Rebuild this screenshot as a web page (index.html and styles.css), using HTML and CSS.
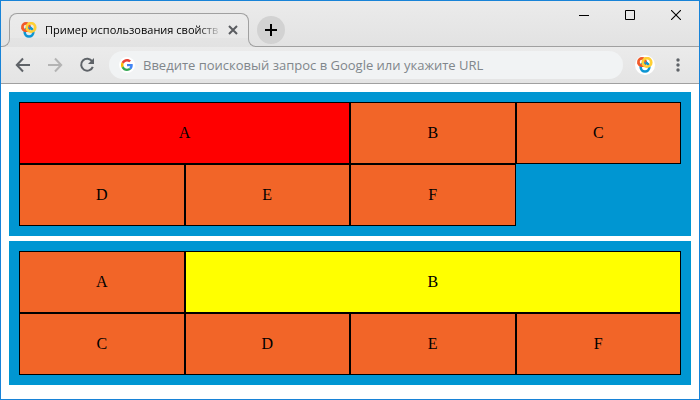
FILE: index.html
```
<!DOCTYPE html>
<html lang="ru">
<head>
<meta charset="utf-8">
<title>Пример использования свойств</title>
<link rel="stylesheet" href="styles.css">
</head>
<body>
<svg class="defs" aria-hidden="true">
  <symbol id="rings" viewBox="0 0 16 16">
    <g fill="none" stroke-width="2.6">
      <circle cx="5" cy="5" r="3.600" stroke="#f15a29"/>
      <circle cx="8" cy="10.2" r="4.300" stroke="#0c95d3"/>
      <path d="M1.400 5.600A3.600 3.600 0 0 0 6.500 8.300" stroke="#f15a29"/>
      <circle cx="10" cy="5.400" r="4.200" stroke="#ffd034" stroke-width="2.800"/>
    </g>
    <path d="M9.400 3.800 11.600 6.800H8.200Z" fill="#0c95d3"/>
    <path d="M7.600 3.600 9.400 4.400 8.600 6.800Z" fill="#f15a29"/>
  </symbol>
</svg>
<div class="window">
  <header class="tabs">
    <span class="flare flare-left"></span>
    <div class="tab">
      <svg class="logo"><use href="#rings"/></svg>
      <span class="title">Пример использования свойств</span>
      <button class="close" aria-label="Закрыть вкладку"><svg width="10" height="10" viewBox="0 0 10 10"><path d="M1 1l8 8M9 1l-8 8" stroke="#5a5c60" stroke-width="2"/></svg></button>
    </div>
    <span class="flare flare-right"></span>
    <div class="strip">
      <button class="add" aria-label="Новая вкладка"><svg width="12" height="12" viewBox="0 0 12 12"><path d="M6 0v12M0 6h12" stroke="#000" stroke-width="2"/></svg></button>
      <div class="controls">
        <button aria-label="Свернуть"><svg width="10" height="10" viewBox="0 0 10 10"><path d="M0 5.5h10" stroke="#000"/></svg></button>
        <button aria-label="Развернуть"><svg width="10" height="10" viewBox="0 0 10 10"><path d="M.5.5h9v9h-9z" fill="none" stroke="#000"/></svg></button>
        <button aria-label="Закрыть"><svg width="10" height="10" viewBox="0 0 10 10"><path d="M0 0l10 10M10 0L0 10" stroke="#000" stroke-width="1.1"/></svg></button>
      </div>
    </div>
  </header>
  <nav class="toolbar">
    <button aria-label="Назад"><svg width="16" height="16" viewBox="0 0 16 16"><path d="M15 8H2M8 1.5 1.8 8 8 14.5" fill="none" stroke="#5f6368" stroke-width="2"/></svg></button>
    <button aria-label="Вперёд" disabled><svg width="16" height="16" viewBox="0 0 16 16"><path d="M1 8h13M8 1.5 14.2 8 8 14.5" fill="none" stroke="#b4b4b4" stroke-width="2"/></svg></button>
    <button aria-label="Обновить"><svg width="16" height="16" viewBox="0 0 16 16"><path d="M13.2 4.4A6 6 0 1 0 13.8 9.8" fill="none" stroke="#5f6368" stroke-width="2"/><path d="M15 1v6H9z" fill="#5f6368"/></svg></button>
    <label class="address">
      <span class="google"><svg width="12" height="12" viewBox="0 0 48 48"><path fill="#EA4335" d="M24 9.5c3.5 0 6.700 1.200 9.200 3.600l6.900-6.900C35.900 2.400 30.500 0 24 0 14.600 0 6.500 5.400 2.600 13.200l8 6.200C12.400 13.700 17.700 9.500 24 9.500z"/><path fill="#4285F4" d="M47 24.600c0-1.600-.2-3.100-.4-4.600H24v9h12.900c-.6 3-2.200 5.500-4.700 7.200l7.700 6C44.400 38 47 31.800 47 24.600z"/><path fill="#FBBC05" d="M10.500 28.600a14.500 14.500 0 0 1 0-9.200l-8-6.200a24 24 0 0 0 0 21.600z"/><path fill="#34A853" d="M24 48c6.500 0 11.900-2.100 15.900-5.800l-7.700-6c-2.200 1.500-4.900 2.300-8.200 2.300-6.300 0-11.600-4.200-13.500-9.900l-8 6.200C6.500 42.600 14.600 48 24 48z"/></svg></span>
      <input type="text" aria-label="Адресная строка" placeholder="Введите поисковый запрос в Google или укажите URL">
    </label>
    <button class="profile" aria-label="Профиль"><svg class="logo"><use href="#rings"/></svg></button>
    <button class="menu" aria-label="Меню"><svg width="4" height="14" viewBox="0 0 4 14"><g fill="#5f6368"><circle cx="2" cy="2" r="1.700"/><circle cx="2" cy="7" r="1.700"/><circle cx="2" cy="12" r="1.700"/></g></svg></button>
  </nav>
  <main>
    <div class="grid">
      <div class="cell red">A</div><div class="cell">B</div><div class="cell">C</div>
      <div class="cell">D</div><div class="cell">E</div><div class="cell">F</div>
    </div>
    <div class="grid">
      <div class="cell">A</div><div class="cell yellow">B</div>
      <div class="cell">C</div><div class="cell">D</div><div class="cell">E</div><div class="cell">F</div>
    </div>
  </main>
</div>
</body>
</html>
```
FILE: styles.css
```
* { box-sizing: border-box; }

body {
  margin: 0;
  font-family: "Liberation Serif", serif;
  font-size: 16px;
}

.defs {
  position: absolute;
  width: 0;
  height: 0;
}

.window {
  min-height: 100vh;
  border: 1px solid #1883d7;
  background: #fff;
}

button {
  display: flex;
  align-items: center;
  justify-content: center;
  flex: none;
  padding: 0;
  border: 0;
  background: none;
}

svg { display: block; }

.logo {
  width: 16px;
  height: 16px;
  flex: none;
}

/* Tab strip */
.tabs {
  display: flex;
  align-items: flex-end;
  height: 46px;
  background: linear-gradient(#ebebeb, #e2e2e2);
}

.flare {
  flex: none;
  width: 9px;
  height: 9px;
  border-bottom: 1px solid #a0a0a0;
}

.flare-left {
  border-right: 1px solid #a0a0a0;
  border-bottom-right-radius: 8px;
}

.flare-right {
  margin-left: -1px;
  border-left: 1px solid #a0a0a0;
  border-bottom-left-radius: 8px;
}

.tab {
  display: flex;
  align-items: center;
  flex: 0 1 240px;
  min-width: 0;
  height: 25px;
  margin: 0 0 9px -1px;
  padding: 8px 10px 0 11px;
  border: 1px solid #a0a0a0;
  border-bottom: 0;
  border-radius: 8px 8px 0 0;
  background: linear-gradient(#ebebeb, #e8e8e8);
}

.title {
  flex: 1;
  min-width: 0;
  margin-left: 8px;
  color: #000;
  font: 11px/16px "Open Sans", "Noto Sans", sans-serif;
  white-space: nowrap;
  mask-image: linear-gradient(to right, #000 calc(100% - 24px), transparent);
}

.close {
  width: 10px;
  height: 16px;
  margin-left: 6px;
}

.strip {
  display: flex;
  align-items: flex-start;
  justify-content: space-between;
  flex: 1;
  height: 46px;
  border-bottom: 1px solid #a0a0a0;
}

.add {
  width: 28px;
  height: 28px;
  margin-top: 15px;
  border-radius: 50%;
  background: #d2d2d2;
}

.controls { display: flex; }

.controls button {
  width: 46px;
  height: 28px;
}

/* Toolbar */
.toolbar {
  display: flex;
  align-items: center;
  height: 37px;
  padding: 0 9px 0 14px;
  border-bottom: 1px solid #a0a0a0;
  background: linear-gradient(#ebebeb, #e4e4e4);
}

.toolbar button {
  width: 16px;
  height: 28px;
  margin-right: 16px;
}

.address {
  display: flex;
  align-items: center;
  flex: 1;
  height: 28px;
  margin-right: 12px;
  margin-left: -2px;
  padding: 0 8px 0 10px;
  border-radius: 14px;
  background: #f1f3f4;
}

.google {
  display: grid;
  place-items: center;
  flex: none;
  width: 16px;
  height: 16px;
  border-radius: 50%;
  background: #fff;
}

.address input {
  flex: 1;
  min-width: 0;
  margin-left: 8px;
  padding: 0;
  border: 0;
  outline: 0;
  background: none;
  font: 13px/20px "Open Sans", "Noto Sans", sans-serif;
}

.address input::placeholder {
  color: #80868b;
  opacity: 1;
}

.toolbar .profile {
  width: 20px;
  height: 20px;
  border-radius: 50%;
  background: #fff;
}

.toolbar .menu {
  width: 14px;
  margin-right: 5px;
}

/* Page */
main {
  display: grid;
  gap: 5px;
  padding: 8px;
}

.grid {
  display: grid;
  grid-template-columns: repeat(4, 1fr);
  padding: 10px;
  background: #0096d2;
}

.cell {
  padding: 21px 10px;
  border: 1px solid #000;
  background: #f26528;
  line-height: 18px;
  text-align: center;
}

.red {
  grid-column: span 2;
  background: #f00;
}

.yellow {
  grid-column: span 3;
  background: #ff0;
}
```
